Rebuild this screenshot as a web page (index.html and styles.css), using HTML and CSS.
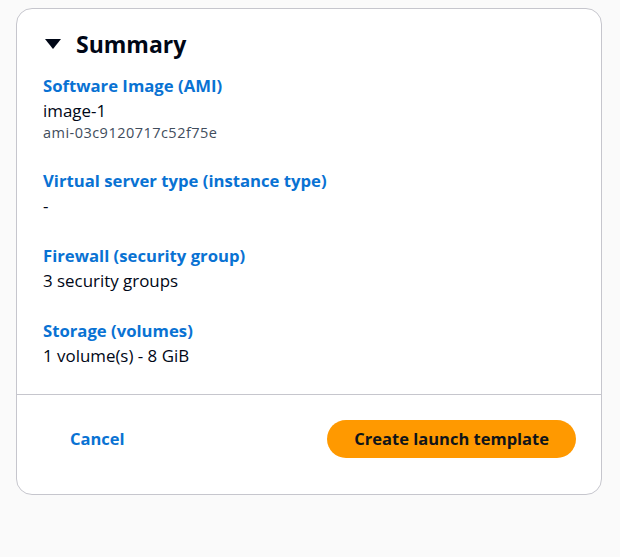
FILE: index.html
```html
<!DOCTYPE html>
<html>
<head>
<meta charset="utf-8">
<link rel="stylesheet" href="styles.css">
</head>
<body>
<div class="card">
  <div class="card-body">
    <h2 class="title"><span class="caret"></span>Summary</h2>
    <div class="group">
      <div class="label">Software Image (AMI)</div>
      <div class="value">image-1</div>
      <div class="sub">ami-03c9120717c52f75e</div>
    </div>
    <div class="group">
      <div class="label">Virtual server type (instance type)</div>
      <div class="value">-</div>
    </div>
    <div class="group">
      <div class="label">Firewall (security group)</div>
      <div class="value">3 security groups</div>
    </div>
    <div class="group">
      <div class="label">Storage (volumes)</div>
      <div class="value">1 volume(s) - 8 GiB</div>
    </div>
  </div>
  <div class="card-footer">
    <button class="btn-link">Cancel</button>
    <button class="btn-primary">Create launch template</button>
  </div>
</div>
</body>
</html>
```
FILE: styles.css
```css
html, body {
  margin: 0;
  padding: 0;
  background: #fafafa;
  font-family: "Open Sans", "Noto Sans", sans-serif;
  color: #000716;
}
body {
  padding: 8px 18px 0 16px;
}
.card {
  background: #ffffff;
  border: 1px solid #c6c6cd;
  border-radius: 16px;
}
.card-body {
  padding: 20px 26px 26px 26px;
}
.title {
  margin: 0 0 14px 0;
  display: flex;
  align-items: center;
  font-size: 23px;
  font-weight: 700;
  line-height: 30px;
}
.caret {
  width: 0;
  height: 0;
  border-left: 8px solid transparent;
  border-right: 8px solid transparent;
  border-top: 10px solid #000716;
  margin: 0 15px 0 2px;
}
.group {
  margin-bottom: 25px;
}
.group:last-child {
  margin-bottom: 0;
}
.label {
  color: #0972d3;
  font-size: 16.7px;
  font-weight: 700;
  line-height: 25px;
}
.value {
  font-size: 16.9px;
  line-height: 25px;
}
.sub {
  font-size: 14.5px;
  letter-spacing: 0.47px;
  line-height: 20px;
  color: #414d5c;
}
.card-footer {
  border-top: 1px solid #c6c6cd;
  padding: 24px 25px 36px 40px;
  display: flex;
  justify-content: space-between;
  align-items: center;
}
.btn-link, .btn-primary {
  font-family: "Open Sans", sans-serif;
  font-stretch: 92%;
  font-size: 16.5px;
  font-weight: 700;
  border: none;
  cursor: pointer;
}
.btn-link {
  background: none;
  color: #0972d3;
  padding: 8px 13px;
}
.btn-primary {
  background: #ff9900;
  color: #0f141a;
  border-radius: 20px;
  height: 38px;
  padding: 0 27px;
}
```
